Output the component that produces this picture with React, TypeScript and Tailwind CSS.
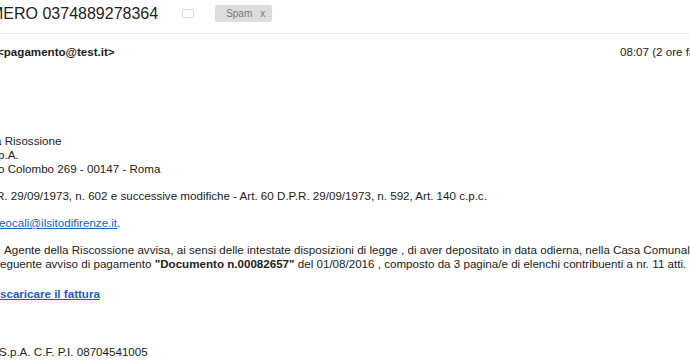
import React from "react";

export default function App() {
  return (
    <div className="w-[690px] h-[362px] overflow-hidden bg-white text-[#222] font-['Liberation_Sans',Arial,sans-serif]">
      {/* Subject row */}
      <div className="flex items-center h-[34px] pb-[6px] border-b border-[#e6e6e6] whitespace-nowrap">
        <div className="shrink-0 text-[16px] leading-[20px] -indent-[10px] text-[#222]">MERO 0374889278364</div>
        <div className="shrink-0 ml-[24px] w-[12px] h-[9px] rounded-[2px] border border-[#d9d9d9]" />
        <div className="shrink-0 ml-[21px] flex items-center justify-between h-[17px] w-[57px] bg-[#dddddd] rounded-[2px] text-[10px] text-[#777] pl-[11px] pr-[7px]">
          <span>Spam</span>
          <span>x</span>
        </div>
      </div>

      {/* From row */}
      <div className="flex mt-[11px] text-[11.6px] leading-[14px] whitespace-nowrap">
        <div className="shrink-0 w-[620px] font-bold -indent-[3px]">&lt;pagamento@test.it&gt;</div>
        <div className="shrink-0">08:07 (2 ore fa)</div>
      </div>

      {/* Body */}
      <div className="text-[11.6px] leading-[14px] whitespace-nowrap">
        <div className="mt-[75px]">
          <div className="-indent-[5px]">a Risossione</div>
          <div className="-indent-[2px]">p.A.</div>
          <div className="-indent-[2px]">o Colombo 269 - 00147 - Roma</div>
        </div>
        <div className="mt-[13px] -indent-[4px]">
          R. 29/09/1973, n. 602 e successive modifiche - Art. 60 D.P.R. 29/09/1973, n. 592, Art. 140 c.p.c.
        </div>
        <div className="mt-[13px] -indent-[1px]">
          <span className="text-[#1a5ccc] underline">eocali@ilsitodifirenze.it</span>.
        </div>
        <div className="mt-[13px]">
          <div className="pl-[4px]">
            Agente della Riscossione avvisa, ai sensi delle intestate disposizioni di legge , di aver depositato in data odierna, nella Casa Comunale
          </div>
          <div>
            eguente avviso di pagamento <b>"Documento n.00082657"</b> del 01/08/2016 , composto da 3 pagina/e di elenchi contribuenti a nr. 11 atti.
          </div>
        </div>
        <div className="mt-[16px]">
          <span className="font-bold text-[#1a5ccc] underline">scaricare il fattura</span>
        </div>
        <div className="mt-[44px] -indent-[1px]">S.p.A. C.F. P.I. 08704541005</div>
      </div>
    </div>
  );
}
